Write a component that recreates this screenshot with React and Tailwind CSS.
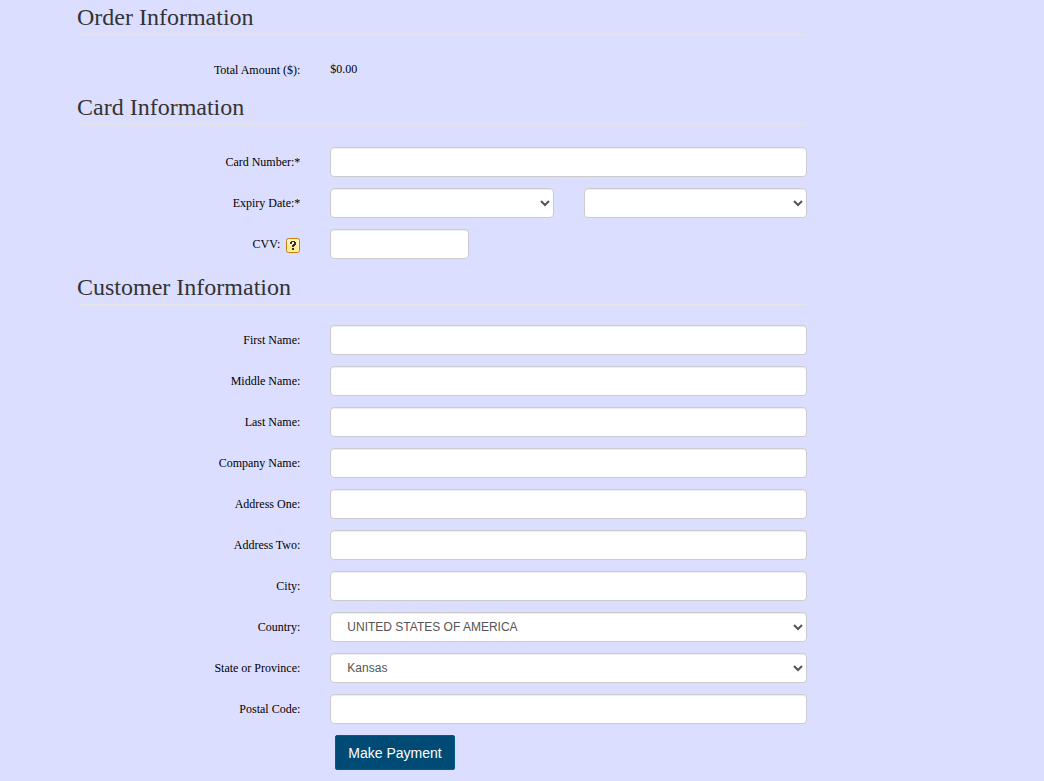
import { useState } from "react";

const customerFields = [
  { id: "firstName", label: "First Name:" },
  { id: "middleName", label: "Middle Name:" },
  { id: "lastName", label: "Last Name:" },
  { id: "companyName", label: "Company Name:" },
  { id: "addressOne", label: "Address One:" },
  { id: "addressTwo", label: "Address Two:" },
  { id: "city", label: "City:" },
  {
    id: "country",
    label: "Country:",
    options: ["UNITED STATES OF AMERICA", "CANADA", "MEXICO"],
  },
  {
    id: "state",
    label: "State or Province:",
    options: ["Kansas", "Missouri", "Nebraska", "Oklahoma"],
  },
  { id: "postalCode", label: "Postal Code:" },
];

const months = ["", "01", "02", "03", "04", "05", "06", "07", "08", "09", "10", "11", "12"];
const years = ["", "2024", "2025", "2026", "2027", "2028", "2029", "2030"];

const control =
  "block w-full h-[30px] rounded-[4px] border border-[#ccc] bg-white px-3 font-['Liberation_Sans',Arial,sans-serif] text-xs text-[#555] shadow-[inset_0_1px_1px_rgba(0,0,0,0.075)]";

function Heading({ children }) {
  return (
    <h2 className="h-[35px] border-b border-[#e5e5e5] text-2xl leading-[34px] text-[#333]">
      {children}
    </h2>
  );
}

function Row({ id, label, extra, children }) {
  return (
    <div className="grid grid-cols-3 items-center gap-x-[30px]">
      <div className="flex items-center justify-end gap-1.5">
        <label htmlFor={id}>{label}</label>
        {extra}
      </div>
      <div className="col-span-2">{children}</div>
    </div>
  );
}

function Select({ options, ...props }) {
  return (
    <select className={control} {...props}>
      {options.map((option) => (
        <option key={option}>{option}</option>
      ))}
    </select>
  );
}

function HelpIcon() {
  return (
    <svg width="14" height="15" viewBox="0 0 14 15">
      <rect x="0.5" y="0.5" width="13" height="14" rx="2" fill="#fff3b8" stroke="#c87d0a" />
      <rect x="2" y="7" width="10" height="6" fill="#ffe98f" />
      <path
        d="M5 3h4v1h1v3h-1v1h-1v1h-2v-2h1v-1h1v-2h-2v2h-2v-2h1zM6 10h2v2h-2z"
        fill="#333"
      />
    </svg>
  );
}

export default function App() {
  const [form, setForm] = useState({});

  const handleChange = (e) => {
    setForm({ ...form, [e.target.name]: e.target.value });
  };

  return (
    <div className="min-h-screen bg-[#dcdeff] pl-[77px] font-['Liberation_Serif','Times_New_Roman',serif] text-xs leading-[18px] text-black">
      <form className="w-[75.5%] pb-[11px]" onSubmit={(e) => e.preventDefault()}>
        <Heading>Order Information</Heading>
        <div className="mt-[25px] mb-[11px] grid grid-cols-3 gap-x-[30px]">
          <div className="pt-px text-right">Total Amount ($):</div>
          <div className="col-span-2">$0.00</div>
        </div>

        <Heading>Card Information</Heading>
        <div className="mt-[22px] mb-[11px] flex flex-col gap-[11px]">
          <Row id="cardNumber" label="Card Number:*">
            <input id="cardNumber" name="cardNumber" className={control} onChange={handleChange} />
          </Row>
          <Row id="expMonth" label="Expiry Date:*">
            <div className="grid grid-cols-2 gap-x-[30px]">
              <Select id="expMonth" name="expMonth" options={months} onChange={handleChange} />
              <Select
                id="expYear"
                name="expYear"
                aria-label="Expiry year"
                options={years}
                onChange={handleChange}
              />
            </div>
          </Row>
          <Row
            id="cvv"
            label="CVV:"
            extra={
              <button type="button" aria-label="What is CVV?" className="pt-0.5">
                <HelpIcon />
              </button>
            }
          >
            <div className="w-[139px]">
              <input id="cvv" name="cvv" className={control} onChange={handleChange} />
            </div>
          </Row>
        </div>

        <Heading>Customer Information</Heading>
        <div className="mt-5 mb-[11px] flex flex-col gap-[11px]">
          {customerFields.map(({ id, label, options }) => (
            <Row key={id} id={id} label={label}>
              {options ? (
                <Select id={id} name={id} options={options} onChange={handleChange} />
              ) : (
                <input id={id} name={id} className={control} onChange={handleChange} />
              )}
            </Row>
          ))}
        </div>

        <div className="grid grid-cols-3 gap-x-[30px]">
          <div className="col-span-2 col-start-2 pl-[5px]">
            <button
              type="submit"
              className="h-[35px] rounded-[2px] border border-[#005a8c] bg-[#004b75] px-3 font-['Liberation_Sans',Arial,sans-serif] text-sm text-white"
            >
              Make Payment
            </button>
          </div>
        </div>
      </form>
    </div>
  );
}
